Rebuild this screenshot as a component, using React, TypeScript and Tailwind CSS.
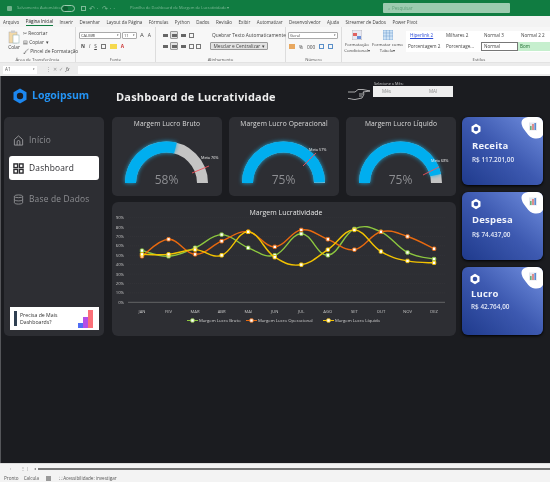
import React from "react";

const MONTHS = ["JAN","FEV","MAR","ABR","MAI","JUN","JUL","AGO","SET","OUT","NOV","DEZ"];
const GREEN = [55,49,58,72,58,50,73,50,78,75,53,46];
const ORANGE = [49,67,51,65,75,59,77,67,56,75,70,57];
const YELLOW = [51,51,56,50,75,48,40,56,77,54,44,42];
const X = (i: number) => 30 + i * 26.55;
const Y = (v: number) => 100.3 - v * 0.94;
function smooth(vals: number[]) {
  const p = vals.map((v, i) => [X(i), Y(v)]);
  let d = `M${p[0][0]} ${p[0][1]}`;
  for (let i = 0; i < p.length - 1; i++) {
    const a = p[Math.max(i - 1, 0)], b = p[i], c = p[i + 1], e = p[Math.min(i + 2, p.length - 1)];
    const k = 0.2;
    d += ` C${b[0] + (c[0] - a[0]) * k} ${b[1] + (c[1] - a[1]) * k} ${c[0] - (e[0] - b[0]) * k} ${c[1] - (e[1] - b[1]) * k} ${c[0]} ${c[1]}`;
  }
  return d;
}
function Series({ vals, color }: { vals: number[]; color: string }) {
  return (
    <g>
      <path d={smooth(vals)} fill="none" stroke={color} strokeWidth="1.4" />
      {vals.map((v, i) => (
        <rect key={i} x={X(i) - 1.7} y={Y(v) - 1.7} width="3.4" height="3.4" rx="0.8" fill="#fff" stroke={color} strokeWidth="1" />
      ))}
    </g>
  );
}

function LineChart() {
  return (
    <svg width="344" height="134" viewBox="0 0 344 134" className="block">
      {[10,20,30,40,50,60,70,80,90].map((v) => (
        <line key={v} x1="16" x2="333" y1={Y(v)} y2={Y(v)} stroke="#3a3b40" strokeWidth="0.4" strokeDasharray="1 1" />
      ))}
      <line x1="16" x2="333" y1={Y(0)} y2={Y(0)} stroke="#8a8a8a" strokeWidth="0.6" />
      {[0,10,20,30,40,50,60,70,80,90].map((v) => (
        <text key={v} x="12" y={Y(v) + 1.5} textAnchor="end" fontSize="4.2" fill="#c4c4c4">{v}%</text>
      ))}
      {MONTHS.map((m, i) => (
        <text key={m} x={X(i)} y="110.5" textAnchor="middle" fontSize="4.2" fill="#c4c4c4">{m}</text>
      ))}
      <text x="174" y="13" textAnchor="middle" fontSize="7" fill="#e4e4e4">Margem Lucratividade</text>
      <Series vals={GREEN} color="#8cc63f" />
      <Series vals={ORANGE} color="#e8690f" />
      <Series vals={YELLOW} color="#f2c200" />
      {[["#8cc63f", 75, "Margem Lucro Bruto"], ["#e8690f", 134, "Margem Lucro Operacional"], ["#f2c200", 211, "Margem Lucro Líquido"]].map(([c, x, t]) => (
        <g key={t as string}>
          <line x1={x as number} x2={(x as number) + 11} y1="118.5" y2="118.5" stroke={c as string} strokeWidth="1" />
          <rect x={(x as number) + 3.8} y="116.8" width="3.4" height="3.4" rx="0.8" fill="#fff" stroke={c as string} strokeWidth="0.8" />
          <text x={(x as number) + 12} y="120" fontSize="4.3" fill="#d0d0d0">{t}</text>
        </g>
      ))}
    </svg>
  );
}

function Gauge({ title, pct, value, line, meta, metaX, metaY }: { title: string; pct: number; value: string; line: number[]; meta: string; metaX: number; metaY: number }) {
  const R = 36, cx = 54.5, cy = 66;
  const ang = Math.PI * (1 - pct);
  const ex = cx + R * Math.cos(ang), ey = cy - R * Math.sin(ang);
  return (
    <div className="w-[110px] h-[79px] rounded-[5px] bg-[#2d2e33] overflow-hidden">
      <svg width="110" height="79" viewBox="0 0 110 79" className="block">
        <text x="55" y="9" textAnchor="middle" fontSize="6.7" fill="#dcdcdc" letterSpacing="0.1">{title}</text>
        <path d={`M${cx - R} ${cy} A${R} ${R} 0 0 1 ${cx + R} ${cy}`} fill="none" stroke="#c4c4c4" strokeWidth="11" />
        <path d={`M${cx - R} ${cy} A${R} ${R} 0 0 1 ${ex} ${ey}`} fill="none" stroke="#00aeef" strokeWidth="11" className="drop-shadow-[0_0_2px_#1ca7d8]" />
        <text x={cx} y="66.5" textAnchor="middle" fontSize="12" fill="#8d8e92">{value}</text>
        <line x1={line[0]} y1={line[1]} x2={line[2]} y2={line[3]} stroke="#f0505a" strokeWidth="0.9" />
        <text x={metaX} y={metaY} fontSize="3.8" fill="#e8e8e8">{meta}</text>
      </svg>
    </div>
  );
}

function Kpi({ title, value, pl, gap, valueGap }: { title: string; value: string; pl: string; gap: string; valueGap: string }) {
  return (
    <div className="relative w-[81px] h-[68px] rounded-[6px] bg-gradient-to-tr from-[#1f3a8c] via-[#3d59b0] to-[#7390e0] overflow-hidden shadow-[0_1px_3px_#000]">
      <svg width="22" height="23" viewBox="0 0 22 23" className="absolute right-0 top-0">
        <path d="M7 0 H22 V18 Q20 22 14 21.500 Q9 21 5 15 Q0 9 .5 5 Q1 1 7 0Z" fill="#fff" />
        <rect x="8" y="5.500" width="8" height="8" fill="#e6e8ee" />
        <rect x="9" y="9" width="1.600" height="4" fill="#6bb07c" />
        <rect x="11.200" y="7" width="1.600" height="6" fill="#d77" />
        <rect x="13.400" y="6" width="1.600" height="7" fill="#5a8ad0" />
      </svg>
      <div className={`flex flex-col pt-[6px] ${pl}`}>
        <svg width="12" height="12" viewBox="0 0 12 12" className="-ml-[2px]">
          <path d="M6 .8 10.500 3.400V8.600L6 11.200 1.500 8.600V3.400Z" fill="#fff" />
          <circle cx="6" cy="6" r="2.300" fill="#3450a4" />
        </svg>
        <span className={`text-[9.5px] leading-[13px] font-bold text-[#f0f3fb] tracking-[0.2px] ${gap}`}>{title}</span>
        <span className={`text-[6.4px] leading-[10px] font-semibold text-[#e4e9f7] ${valueGap}`}>{value}</span>
      </div>
    </div>
  );
}

function NavItem({ icon, label, active }: { icon: React.ReactNode; label: string; active?: boolean }) {
  return (
    <div className={`mx-[5px] h-[24px] rounded-[3px] flex items-center gap-[5px] pl-[4px] ${active ? "bg-white text-[#2a2a2e]" : "text-[#8e8f93]"}`}>
      {icon}
      <span className="text-[8.400px] tracking-[0.2px]">{label}</span>
    </div>
  );
}

function Sidebar() {
  return (
    <div className="w-[100px] h-[219px] rounded-[5px] bg-[#2d2e33] flex flex-col pt-[11px] pb-[6px] mr-[8px]">
      <NavItem label="Início" icon={
        <svg width="11" height="11" viewBox="0 0 24 24" fill="none" stroke="#9a9a9e" strokeWidth="2"><path d="M3 10 12 2l9 8v12H3Z" /><path d="M9 22v-7a3 3 0 0 1 6 0v7" /></svg>
      } />
      <div className="h-[4px]" />
      <NavItem active label="Dashboard" icon={
        <svg width="11" height="11" viewBox="0 0 24 24" fill="none" stroke="#2a2a2e" strokeWidth="3"><rect x="2" y="2" width="8" height="8" /><rect x="14" y="2" width="8" height="8" /><rect x="2" y="14" width="8" height="8" /><rect x="14" y="14" width="8" height="8" /></svg>
      } />
      <div className="h-[7px]" />
      <NavItem label="Base de Dados" icon={
        <svg width="11" height="11" viewBox="0 0 24 24" fill="none" stroke="#8e8f93" strokeWidth="2"><ellipse cx="12" cy="5" rx="9" ry="3" /><path d="M3 5v14c0 1.700 4 3 9 3s9-1.300 9-3V5" /><path d="M3 12c0 1.700 4 3 9 3s9-1.300 9-3" /></svg>
      } />
      <div className="mt-auto ml-[6px] mr-[5px] h-[23px] bg-white flex items-center pl-[4px] relative">
        <div className="w-[3px] h-[15px] bg-[#2f3f52] mr-[3px]" />
        <span className="text-[5.200px] leading-[7px] text-[#333]">Precisa de Mais<br />Dashboards?</span>
        <div className="ml-auto mr-[6px] flex items-end">
          <div className="w-[5px] h-[5px] bg-[#4f6df5]" />
          <div className="w-[5px] h-[11px] bg-[#b44fe8]" />
          <div className="w-[5px] h-[18px] bg-[#fb6f78]" />
        </div>
      </div>
    </div>
  );
}

const R = ({ children, className = "" }: { children: React.ReactNode; className?: string }) => (
  <span className={`text-[4.800px] leading-[7px] text-[#444] whitespace-nowrap ${className}`}>{children}</span>
);

const Box = ({ w, children }: { w: string; children?: React.ReactNode }) => (
  <div className={`${w} h-[7px] bg-white border-[0.5px] border-[#aaa] rounded-[1px] flex items-center justify-between px-[1px] text-[4px] text-[#444]`}>{children}<span className="text-[3px]">▾</span></div>
);

const Ic = ({ c = "#777" }: { c?: string }) => <div className="w-[5px] h-[5px] shrink-0 border-[0.5px]" style={{ borderColor: c }} />;
const AlignIc = ({ active }: { active?: boolean }) => (
  <div className={`w-[8px] h-[8px] shrink-0 flex flex-col justify-center items-center gap-[0.7px] ${active ? "bg-[#e2e2e2] border-[0.5px] border-[#999] rounded-[1px]" : ""}`}>
    <div className="w-[5px] h-[0.5px] bg-[#666]" /><div className="w-[5px] h-[0.5px] bg-[#666]" /><div className="w-[5px] h-[0.5px] bg-[#666]" />
  </div>
);

function GroupLabel({ children }: { children: React.ReactNode }) {
  return <div className="absolute bottom-[0px] left-0 right-0 text-center text-[4.300px] leading-[6px] text-[#555]">{children}</div>;
}

function Ribbon() {
  return (
    <div className="h-[36px] bg-[#f7f7f7] flex text-[#444] border-b border-[#e3e3e3]">
      <div className="relative w-[76px] shrink-0 border-r border-[#ddd] flex pl-[8px] pt-[3px]">
        <div className="w-[14px] flex flex-col items-center">
          <svg width="12" height="14" viewBox="0 0 12 14"><rect x="1" y="2" width="8" height="11" fill="#f3d9a8" stroke="#aaa" strokeWidth="0.5" /><rect x="5" y="5" width="6" height="8" fill="#fff" stroke="#8aa" strokeWidth="0.5" /><rect x="3" y="0.500" width="4" height="2.500" fill="#ccc" /></svg>
          <R className="text-[4.400px]">Colar</R>
        </div>
        <div className="ml-[3px] flex flex-col gap-[2px]">
          <R>✂ Recortar</R><R>▤ Copiar &nbsp;▾</R><R>🖌 Pincel de Formatação</R>
        </div>
        <GroupLabel>Área de Transferência</GroupLabel>
      </div>
      <div className="relative w-[80px] shrink-0 border-r border-[#ddd] pl-[3px] pt-[5px]">
        <div className="flex items-center gap-[1px]">
          <Box w="w-[42px]">CALIBRI</Box><Box w="w-[15px]">11</Box><R className="ml-[2px] text-[6px]">A</R><R className="ml-[3px] text-[5px]">A</R>
        </div>
        <div className="flex items-center gap-[4px] mt-[4px] pl-[2px]">
          <R className="font-bold">N</R><R className="italic">I</R><R className="underline">S</R><Ic /><div className="w-[7px] h-[5px] bg-[#f5d94e]" /><R className="text-[#c33] font-bold">A</R>
        </div>
        <GroupLabel>Fonte</GroupLabel>
      </div>
      <div className="relative w-[130px] shrink-0 border-r border-[#ddd] pl-[5px] pt-[4px] flex">
        <div className="w-[28px] shrink-0 flex flex-col gap-[3px]">
          <div className="flex gap-[1px]"><AlignIc /><AlignIc active /><AlignIc /></div>
          <div className="flex gap-[1px]"><AlignIc /><AlignIc active /><AlignIc /></div>
        </div>
        <div className="w-[16px] shrink-0 flex flex-col">
          <div className="flex gap-[2px] mt-[2px]"><Ic /></div>
          <div className="flex gap-[2px] mt-[6px]"><Ic /><Ic /></div>
        </div>
        <div className="flex flex-col gap-[3px] ml-[5px]">
          <R className="mt-[1px] ml-[2px]">Quebrar Texto Automaticamente</R>
          <div className="w-[58px] h-[8px] bg-[#e2e2e2] border-[0.5px] border-[#999] rounded-[1px] flex items-center justify-center"><R>Mesclar e Centralizar ▾</R></div>
        </div>
        <GroupLabel>Alinhamento</GroupLabel>
      </div>
      <div className="relative w-[56px] shrink-0 border-r border-[#ddd] pl-[2px] pt-[5px]">
        <Box w="w-[50px]">Geral</Box>
        <div className="flex gap-[4px] mt-[5px] pl-[1px]"><div className="w-[6px] h-[5px] bg-[#e8a860]" /><R>%</R><R>000</R><Ic c="#5a8fc8" /><Ic c="#5a8fc8" /></div>
        <GroupLabel>Número</GroupLabel>
      </div>
      <div className="flex w-[62px] shrink-0 items-start pt-[3px]">
        <div className="w-[30px] flex flex-col items-center leading-[5px]">
          <svg width="10" height="10" viewBox="0 0 10 10"><rect width="10" height="10" fill="#e8e8f2" stroke="#999" strokeWidth="0.5" /><rect x="1" y="3" width="4" height="3" fill="#e06060" /><rect x="5" y="6" width="4" height="3" fill="#6a8fd8" /></svg>
          <span className="text-[4.300px] leading-[5.500px] text-center mt-[2px]">Formatação Condicional▾</span>
        </div>
        <div className="w-[31px] flex flex-col items-center">
          <svg width="10" height="10" viewBox="0 0 10 10"><rect width="10" height="10" fill="#cfe3f5" stroke="#5a8fc8" strokeWidth="0.5" /><path d="M0 3H10M0 6H10M3.300 0V10M6.600 0V10" stroke="#5a8fc8" strokeWidth="0.4" /></svg>
          <span className="text-[4.300px] leading-[5.500px] text-center mt-[2px]">Formatar como Tabela▾</span>
        </div>
      </div>
      <div className="relative flex-1 pl-[2px] pt-[4px]">
        <div className="bg-white grid grid-cols-[37px_37px_37px_36px] h-[21px] items-center text-[4.600px] pl-[1px]">
          <span className="text-[#2b4bd8] underline pl-[3px]">Hiperlink 2</span><span className="pl-[2px]">Milhares 2</span><span className="pl-[3px]">Normal 3</span><span className="pl-[3px]">Normal 2 2</span>
          <span className="pl-[1px]">Porcentagem 2</span><span className="pl-[2px]">Porcentage...</span>
          <span className="border-[0.5px] border-[#777] h-[9px] flex items-center pl-[2px] mr-[0.5px]">Normal</span>
          <span className="bg-[#c6efce] h-[9px] flex items-center pl-[2px] text-[#1e6b30]">Bom</span>
        </div>
        <GroupLabel>Estilos</GroupLabel>
      </div>
    </div>
  );
}

export default function App() {
  return (
    <div className="w-[550px] h-[482px] overflow-hidden flex flex-col bg-[#1b1c20] font-['Open_Sans',sans-serif] blur-[0.3px]">
      <div className="h-[16px] bg-[#107c41] flex items-center pl-[7px] text-[4px] text-[#7fbb98] relative whitespace-nowrap">
        <div className="w-[5px] h-[5px] rounded-[1px] bg-[#6fb08a] mr-[5px]" />
        <span className="w-[32px]">Salvamento Automático</span>
        <div className="ml-[12px] w-[14px] h-[7px] rounded-full border-[0.5px] border-[#9fcbb0] flex items-center pl-[1px]"><div className="w-[5px] h-[5px] rounded-full bg-[#0c5f32]" /></div>
        <div className="ml-[6px] w-[5px] h-[5px] border-[0.5px] border-[#7fbb98]" />
        <span className="ml-[3px] text-[7px] leading-none">↶ ·</span>
        <span className="ml-[3px] text-[7px] leading-none">↷ · ·</span>
        <span className="absolute left-[130px]">Planilha de Dashboard de Margem de Lucratividade ▾</span>
        <div className="absolute left-[383px] top-[3px] w-[127px] h-[10px] rounded-[1px] bg-[#9ccbaf] flex items-center pl-[5px] text-[4.500px] text-[#5f9f7a]">⌕ <span className="ml-[1px]">Pesquisar</span></div>
      </div>
      <div className="h-[11px] bg-[#f3f3f3] flex items-center pt-[1px] pl-[3px] gap-[6.500px] text-[4.500px] text-[#444] whitespace-nowrap">
        <span>Arquivo</span>
        <span className="border-b border-[#107c41] text-[#222]">Página Inicial</span>
        <span>Inserir</span><span>Desenhar</span><span>Layout da Página</span><span>Fórmulas</span><span>Python</span><span>Dados</span><span>Revisão</span><span>Exibir</span><span>Automatizar</span><span>Desenvolvedor</span><span>Ajuda</span><span>Streamer de Dados</span><span>Power Pivot</span>
      </div>
      <Ribbon />
      <div className="h-[13px] bg-[#ececec] flex items-center pl-[3px] gap-[3px] text-[4.600px] text-[#555]">
        <div className="w-[34px] h-[8px] bg-white flex items-center justify-between px-[2px]"><span>A1</span><span className="text-[3px]">▾</span></div>
        <span className="w-[35px] text-center text-[#999]">⋮ &nbsp;✕ &nbsp;✓ &nbsp;<span className="italic text-[#444]">fx</span></span>
        <div className="flex-1 h-[8px] bg-white" />
      </div>

      <div className="h-[387px] border-l border-[#55565a] pl-[3px] flex flex-col">
        <div className="h-[41px] flex items-center">
          <div className="w-[108px] flex items-center pl-[8px] pb-[2px]">
            <svg width="16" height="16" viewBox="0 0 16 16"><path d="M8 .5 14.500 4.200V11.800L8 15.500 1.500 11.800V4.200Z" fill="#1c87f0" /><circle cx="8" cy="8" r="3.200" fill="#1b1c20" /></svg>
            <span className="ml-[4px] text-[10.500px] font-bold text-[#2494f5]">Logoipsum</span>
          </div>
          <span className="ml-[4px] mt-[1px] w-[231px] text-[11px] font-bold text-[#eeeeee] tracking-[0.2px] whitespace-nowrap">Dashboard de Lucratividade</span>
          <svg width="24" height="14" viewBox="0 0 24 14" fill="none" stroke="#e8e8e8" strokeWidth="0.7" className="mt-[-4px]">
            <path d="M1 4h7l3-2.500h5l7 1.500-7 1 1 2-1 2-1 2-7 1.500c-3 0-4-1-7-1" /><path d="M12 6h4M12 8h3" />
          </svg>
          <div className="ml-[2px] flex flex-col mt-[-15px]">
            <span className="text-[3.800px] leading-[5px] text-[#ccc] pl-[1px]">Selecione o Mês:</span>
            <div className="w-[80px] h-[11px] bg-[#eeeeee] flex items-center text-[4.600px] text-[#888]"><span className="ml-[9px]">Mês</span><span className="ml-[38px]">MAI</span></div>
          </div>
        </div>
        <div className="flex">
          <Sidebar />
          <div className="w-[344px] mr-[6px] flex flex-col gap-[6px]">
            <div className="flex justify-between">
              <Gauge title="Margem Lucro Bruto" pct={0.58} value="58%" line={[80, 56, 97, 49]} meta="Meta 76%" metaX={89} metaY={42} />
              <Gauge title="Margem Lucro Operacional" pct={0.995} value="75%" line={[74, 49, 87, 36]} meta="Meta 57%" metaX={80} metaY={33.5} />
              <Gauge title="Margem Lucro Líquido" pct={0.93} value="75%" line={[77, 58, 93, 50]} meta="Meta 68%" metaX={85} metaY={44.5} />
            </div>
            <div className="h-[134px] rounded-[6px] bg-[#2d2e33] overflow-hidden"><LineChart /></div>
          </div>
          <div className="flex flex-col gap-[7px]">
            <Kpi title="Receita" value="R$ 117.201,00" pl="pl-[10px]" gap="mt-[4px]" valueGap="mt-[3px]" />
            <Kpi title="Despesa" value="R$ 74.437,00" pl="pl-[10px]" gap="mt-[3px]" valueGap="mt-[4px]" />
            <Kpi title="Lucro" value="R$ 42.764,00" pl="pl-[9px]" gap="mt-[2px]" valueGap="mt-[2px]" />
          </div>
        </div>
      </div>

      <div className="h-[11px] bg-[#f3f3f3] border-t border-[#ddd] flex items-center text-[4px] text-[#777]">
        <span className="ml-[10px]">‹</span><span className="ml-[10px]">⋮ |</span><span className="ml-[6px] text-[3.500px]">◂</span>
        <div className="ml-[2px] flex-1 h-[2.500px] bg-[#777]" />
      </div>
      <div className="h-[8px] bg-[#f3f3f3] flex items-center pl-[4px] text-[4.600px] text-[#555] gap-[5px] whitespace-nowrap">
        <span>Pronto</span><span>Calcula</span><div className="ml-[2px] w-[5px] h-[5px] bg-[#999]" /><span className="ml-[3px]">⛶ Acessibilidade: investigar</span>
      </div>
    </div>
  );
}
